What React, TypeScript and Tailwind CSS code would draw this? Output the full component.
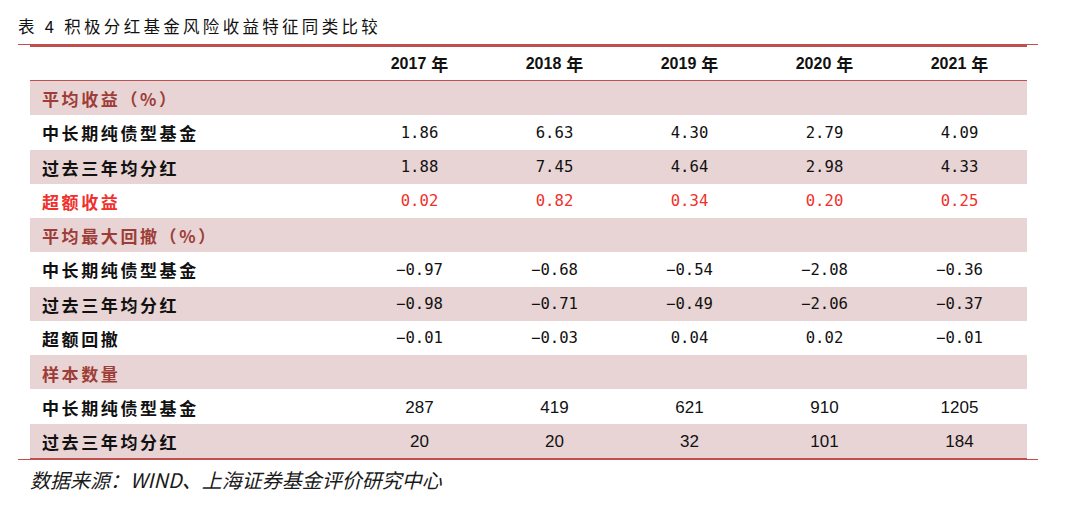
import React from "react";

type Row =
  | { kind: "section"; label: string }
  | { kind: "data"; label: string; values: string[]; red?: boolean; plain?: boolean };

const rows: Row[] = [
  { kind: "section", label: "平均收益（%）" },
  { kind: "data", label: "中长期纯债型基金", values: ["1.86", "6.63", "4.30", "2.79", "4.09"] },
  { kind: "data", label: "过去三年均分红", values: ["1.88", "7.45", "4.64", "2.98", "4.33"] },
  { kind: "data", label: "超额收益", values: ["0.02", "0.82", "0.34", "0.20", "0.25"], red: true },
  { kind: "section", label: "平均最大回撤（%）" },
  { kind: "data", label: "中长期纯债型基金", values: ["−0.97", "−0.68", "−0.54", "−2.08", "−0.36"] },
  { kind: "data", label: "过去三年均分红", values: ["−0.98", "−0.71", "−0.49", "−2.06", "−0.37"] },
  { kind: "data", label: "超额回撤", values: ["−0.01", "−0.03", "0.04", "0.02", "−0.01"] },
  { kind: "section", label: "样本数量" },
  { kind: "data", label: "中长期纯债型基金", values: ["287", "419", "621", "910", "1205"], plain: true },
  { kind: "data", label: "过去三年均分红", values: ["20", "20", "32", "101", "184"], plain: true },
];

const years = ["2017", "2018", "2019", "2020", "2021"];

export default function App() {
  return (
    <div className="w-[1080px] h-[505px] bg-white relative overflow-hidden">
      <div className="h-[44px] pt-[15px] pl-[18px]">
        <div className="text-[16.5px] leading-[22px] tracking-[3.3px] text-[#111] font-['Noto_Sans_CJK_SC',sans-serif]">
          表 4 积极分红基金风险收益特征同类比较
        </div>
      </div>
      <div className="ml-[18px] w-[1020px] border-t border-[#c0504d]">
        <div className="ml-[12px] w-[997px] border-t-2 border-[#c0504d]">
          {/* header */}
          <div className="h-[34px] flex items-center border-b border-[#c0504d]">
            <div className="w-[322px]" />
            {years.map((y) => (
              <div key={y} className="w-[135px] flex justify-center items-center">
                <span className="font-['Liberation_Sans',sans-serif] font-bold text-[16px] text-[#111]">{y}</span>
                <span className="ml-[5px] font-['Noto_Sans_CJK_SC',sans-serif] font-bold text-[17px] text-[#111]">年</span>
              </div>
            ))}
          </div>
          {/* body */}
          <div className="h-[377px] grid grid-rows-[repeat(11,1fr)]">
            {rows.map((r, i) =>
              r.kind === "section" ? (
                <div key={i} className="bg-[#e8d4d4] flex items-center pl-[12px] pt-[2px]">
                  <span className="font-['Noto_Sans_CJK_SC',sans-serif] font-bold text-[17px] tracking-[2.6px] text-[#9e3d38]">
                    {r.label}
                  </span>
                </div>
              ) : (
                <div key={i} className={`flex items-center pt-[2px] ${i % 2 === 0 ? "bg-[#e8d4d4]" : "bg-white"}`}>
                  <div className="w-[322px] pl-[12px]">
                    <span
                      className={`font-['Noto_Sans_CJK_SC',sans-serif] font-bold text-[17px] tracking-[2.6px] ${
                        r.red ? "text-[#f0302c]" : "text-[#111]"
                      }`}
                    >
                      {r.label}
                    </span>
                  </div>
                  {r.values.map((v, j) => (
                    <div key={j} className="w-[135px] flex justify-center">
                      <span
                        className={
                          r.plain
                            ? "font-['Liberation_Sans',sans-serif] text-[17px] text-[#111]"
                            : `font-['DejaVu_Sans_Mono',monospace] text-[15.6px] ${r.red ? "text-[#f0302c]" : "text-[#111]"}`
                        }
                      >
                        {v}
                      </span>
                    </div>
                  ))}
                </div>
              )
            )}
          </div>
          <div className="h-[2px] bg-[#c0504d]" />
        </div>
      </div>
      <div className="ml-[18px] w-[1020px] h-[1px] bg-[#c0504d] -mt-[1px]" />
      <div className="pl-[30px] pt-[7px]">
        <span className="italic text-[20px] leading-[26px] text-[#1a1a1a] font-['Noto_Sans_CJK_SC',sans-serif]">
          数据来源：WIND、上海证券基金评价研究中心
        </span>
      </div>
    </div>
  );
}
